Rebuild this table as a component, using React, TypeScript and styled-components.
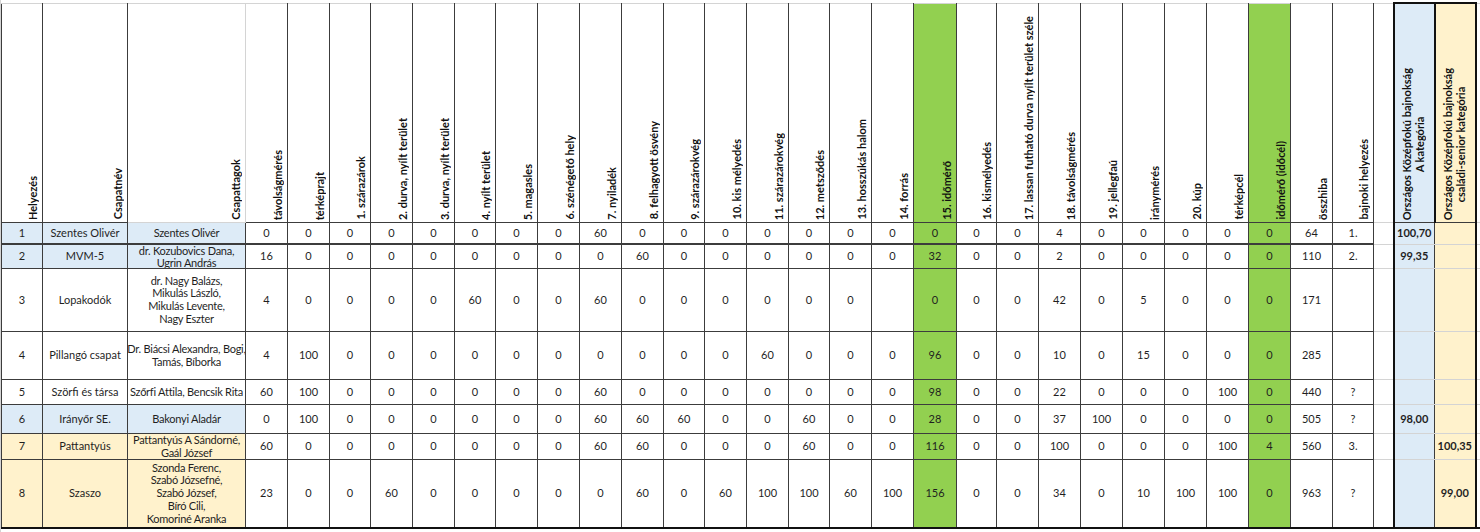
import React from 'react';
import styled, { createGlobalStyle } from 'styled-components';

const GlobalStyle = createGlobalStyle`
    html, body {
        margin: 0;
        padding: 0;
        background: #ffffff;
    }
    body {
        font-family: Lato, "Open Sans", "Liberation Sans", sans-serif;
        color: #1f1f1f;
    }
`;

const BLUE = '#ddebf7';
const YELLOW = '#fff2cc';
const GREEN = '#92d050';
const LINE = '#3c3c3c';
const GRID = '#d4d4d4';

type Tone = 'blue' | 'yellow' | 'green' | undefined;

const toneColor = (tone: Tone) =>
    tone === 'blue' ? BLUE : tone === 'yellow' ? YELLOW : tone === 'green' ? GREEN : '#ffffff';

const Page = styled.div`
    width: 1480px;
    height: 532px;
    overflow: hidden;
    padding-top: 2px;
    box-sizing: border-box;
    border-left: 1px solid ${GRID};
`;

const Sheet = styled.table`
    border-collapse: collapse;
    table-layout: fixed;
    width: 1479px;
`;

const HeadCell = styled.th<{ $tone?: Tone; $soft?: boolean; $box?: boolean }>`
    padding: 0;
    background: ${(p) => toneColor(p.$tone)};
    border: 1px solid ${(p) => (p.$soft ? GRID : LINE)};
    border-top: 1px solid ${GRID};
    ${(p) => p.$box && `border-left: 2px solid #111; border-right: 2px solid #111; border-top: 2px solid #111;`}
`;

const HeadInner = styled.div<{ $center?: boolean }>`
    height: 218px;
    display: flex;
    align-items: flex-end;
    justify-content: ${(p) => (p.$center ? 'center' : 'flex-end')};
    padding: 0 3px 2px 0;
    box-sizing: border-box;
    overflow: hidden;
`;

const VText = styled.span`
    writing-mode: vertical-rl;
    transform: rotate(180deg);
    white-space: nowrap;
    font-weight: 700;
    font-size: 11px;
    line-height: 13px;
    color: #111;
`;

const Cell = styled.td<{ $tone?: Tone; $soft?: boolean; $box?: 'left' | 'right'; $thick?: boolean }>`
    padding: 0;
    background: ${(p) => toneColor(p.$tone)};
    border: 1px solid ${(p) => (p.$soft ? GRID : LINE)};
    ${(p) => p.$thick && !p.$soft && `border-bottom-width: 2px;`}
    ${(p) => p.$box === 'left' && `border-left: 2px solid #111; border-top-color: ${GRID}; border-bottom-color: ${GRID}; border-bottom-width: 1px;`}
    ${(p) => p.$box === 'right' && `border-right: 2px solid #111; border-top-color: ${GRID}; border-bottom-color: ${GRID}; border-bottom-width: 1px;`}
`;

const CellInner = styled.div<{ $h: number; $bold?: boolean; $tight?: boolean; $lh?: number }>`
    height: ${(p) => p.$h}px;
    display: flex;
    align-items: center;
    justify-content: center;
    text-align: center;
    font-size: 11px;
    line-height: ${(p) => p.$lh ?? 12.7}px;
    letter-spacing: ${(p) => (p.$tight ? '-0.25px' : '0')};
    font-weight: ${(p) => (p.$bold ? 700 : 400)};
    white-space: nowrap;
    overflow: hidden;
`;

const LastRow = styled.tr`
    td {
        border-bottom: 2px solid #111;
    }
`;

const widths = [
    41, 85, 118,
    42, 42, 41, 42, 42, 41, 42, 42, 42, 42, 41, 42, 42, 41, 42, 42, 43, 40, 42, 42, 42, 42, 42, 42, 42, 42, 41,
    20, 41, 41, 5,
];

const heads: { label: string; tone?: Tone; soft?: boolean }[] = [
    { label: 'Helyezés' },
    { label: 'Csapatnév' },
    { label: 'Csapattagok', soft: true },
    { label: 'távolságmérés' },
    { label: 'térképrajt' },
    { label: '1. szárazárok' },
    { label: '2. durva, nyílt terület' },
    { label: '3. durva, nyílt terület' },
    { label: '4. nyílt terület' },
    { label: '5. magasles' },
    { label: '6. szénégető hely' },
    { label: '7. nyiladék' },
    { label: '8. felhagyott ösvény' },
    { label: '9. szárazárokvég' },
    { label: '10. kis mélyedés' },
    { label: '11. szárazárokvég' },
    { label: '12. metsződés' },
    { label: '13. hosszúkás halom' },
    { label: '14. forrás' },
    { label: '15. időmérő', tone: 'green' },
    { label: '16. kismélyedés' },
    { label: '17. lassan futható durva nyílt terület széle' },
    { label: '18. távolságmérés' },
    { label: '19. jellegfaú' },
    { label: 'iránymérés' },
    { label: '20. kúp' },
    { label: 'térképcél' },
    { label: 'időmérő (időcél)', tone: 'green' },
    { label: 'összhiba' },
    { label: 'bajnoki helyezés' },
];

interface ITeam {
    place: string;
    name: string;
    members: string[];
    tone?: Tone;
    height: number;
    lineHeight?: number;
    scores: string[];
    catA?: string;
    catB?: string;
}

const teams: ITeam[] = [
    {
        place: '1', name: 'Szentes Olivér', members: ['Szentes Olivér'], tone: 'blue', height: 20,
        scores: ['0', '0', '0', '0', '0', '0', '0', '0', '60', '0', '0', '0', '0', '0', '0', '0', '0', '0', '0', '4', '0', '0', '0', '0', '0', '64', '1.'],
        catA: '100,70',
    },
    {
        place: '2', name: 'MVM-5', members: ['dr. Kozubovics Dana,', 'Ugrin András'], tone: 'blue', height: 23, lineHeight: 11.5,
        scores: ['16', '0', '0', '0', '0', '0', '0', '0', '0', '60', '0', '0', '0', '0', '0', '0', '32', '0', '0', '2', '0', '0', '0', '0', '0', '110', '2.'],
        catA: '99,35',
    },
    {
        place: '3', name: 'Lopakodók', members: ['dr. Nagy Balázs,', 'Mikulás László,', 'Mikulás Levente,', 'Nagy Eszter'], height: 62,
        scores: ['4', '0', '0', '0', '0', '60', '0', '0', '60', '0', '0', '0', '0', '0', '0', '', '0', '0', '0', '42', '0', '5', '0', '0', '0', '171', ''],
    },
    {
        place: '4', name: 'Pillangó csapat', members: ['Dr. Biácsi Alexandra, Bogi,', 'Tamás, Bíborka'], height: 47,
        scores: ['4', '100', '0', '0', '0', '0', '0', '0', '0', '0', '0', '0', '60', '0', '0', '0', '96', '0', '0', '10', '0', '15', '0', '0', '0', '285', ''],
    },
    {
        place: '5', name: 'Szörfi és társa', members: ['Szőrfi Attila, Bencsik Rita'], height: 24,
        scores: ['60', '100', '0', '0', '0', '0', '0', '0', '60', '0', '0', '0', '0', '0', '0', '0', '98', '0', '0', '22', '0', '0', '0', '100', '0', '440', '?'],
    },
    {
        place: '6', name: 'Irányőr SE.', members: ['Bakonyi Aladár'], tone: 'blue', height: 28,
        scores: ['0', '100', '0', '0', '0', '0', '0', '0', '60', '60', '60', '0', '0', '60', '0', '0', '28', '0', '0', '37', '100', '0', '0', '0', '0', '505', '?'],
        catA: '98,00',
    },
    {
        place: '7', name: 'Pattantyús', members: ['Pattantyús A Sándorné,', 'Gaál József'], tone: 'yellow', height: 25,
        scores: ['60', '0', '0', '0', '0', '0', '0', '0', '60', '60', '0', '0', '0', '60', '0', '0', '116', '0', '0', '100', '0', '0', '0', '100', '4', '560', '3.'],
        catB: '100,35',
    },
    {
        place: '8', name: 'Szaszo', members: ['Szonda Ferenc,', 'Szabó Józsefné,', 'Szabó József,', 'Bíró Cili,', 'Komoriné Aranka'], tone: 'yellow', height: 67,
        scores: ['23', '0', '0', '60', '0', '0', '0', '0', '0', '60', '0', '60', '100', '100', '60', '100', '156', '0', '0', '34', '0', '10', '100', '100', '0', '963', '?'],
        catB: '99,00',
    },
];

const GREEN_COLS = [16, 24];

function TeamRow({ team, first }: { team: ITeam; first: boolean }) {
    const h = team.height;
    return (
        <>
            <Cell $tone={team.tone} $thick={first}><CellInner $h={h}>{team.place}</CellInner></Cell>
            <Cell $tone={team.tone} $thick={first}><CellInner $h={h}>{team.name}</CellInner></Cell>
            <Cell $tone={team.tone} $thick={first}>
                <CellInner $h={h} $tight $lh={team.lineHeight}>
                    <div>
                        {team.members.map((m, i) => (
                            <div key={i}>{m}</div>
                        ))}
                    </div>
                </CellInner>
            </Cell>
            {team.scores.map((s, i) => (
                <Cell key={i} $tone={GREEN_COLS.includes(i) ? 'green' : undefined} $thick={first}>
                    <CellInner $h={h}>{s}</CellInner>
                </Cell>
            ))}
            <Cell $soft><CellInner $h={h} /></Cell>
            <Cell $tone="blue" $box="left"><CellInner $h={h} $bold>{team.catA}</CellInner></Cell>
            <Cell $tone="yellow" $box="right"><CellInner $h={h} $bold>{team.catB}</CellInner></Cell>
            <Cell $soft><CellInner $h={h} /></Cell>
        </>
    );
}

export default function App() {
    return (
        <Page>
            <GlobalStyle />
            <Sheet>
                <colgroup>
                    {widths.map((w, i) => (
                        <col key={i} style={{ width: w }} />
                    ))}
                </colgroup>
                <thead>
                    <tr>
                        {heads.map((h, i) => (
                            <HeadCell key={i} $tone={h.tone} $soft={h.soft}>
                                <HeadInner>
                                    <VText>{h.label}</VText>
                                </HeadInner>
                            </HeadCell>
                        ))}
                        <HeadCell $soft><HeadInner /></HeadCell>
                        <HeadCell $tone="blue" $box>
                            <HeadInner $center>
                                <VText>Országos Középfokú bajnokság<br />A kategória</VText>
                            </HeadInner>
                        </HeadCell>
                        <HeadCell $tone="yellow" $box>
                            <HeadInner $center>
                                <VText>Országos Középfokú bajnokság<br />családi-senior kategória</VText>
                            </HeadInner>
                        </HeadCell>
                        <HeadCell $soft><HeadInner /></HeadCell>
                    </tr>
                </thead>
                <tbody>
                    {teams.map((t, i) =>
                        i === teams.length - 1 ? (
                            <LastRow key={t.place}><TeamRow team={t} first={false} /></LastRow>
                        ) : (
                            <tr key={t.place}><TeamRow team={t} first={i === 0} /></tr>
                        ),
                    )}
                </tbody>
            </Sheet>
        </Page>
    );
}
